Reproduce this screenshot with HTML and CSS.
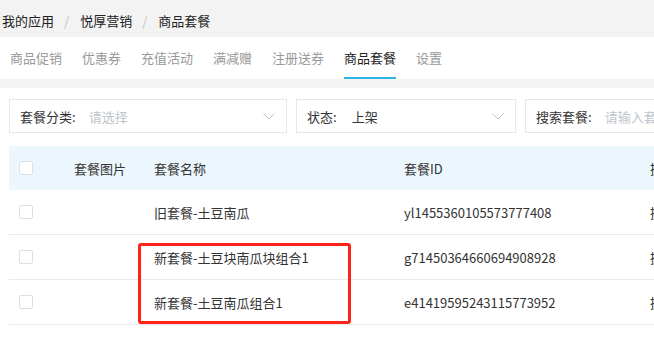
FILE: index.html
```html
<!doctype html>
<html lang="zh-CN">
  <head>
    <meta charset="utf-8" />
    <title>商品套餐</title>
    <link rel="stylesheet" href="styles.css">
  </head>
  <body>
<div class="crumb">
  <span>我的应用</span><span class="sep">/</span><span>悦厚营销</span><span class="sep">/</span><span>商品套餐</span>
</div>

<div class="tabs">
  <span class="tab">商品促销</span>
  <span class="tab">优惠券</span>
  <span class="tab">充值活动</span>
  <span class="tab">满减赠</span>
  <span class="tab">注册送券</span>
  <span class="tab active">商品套餐</span>
  <span class="tab">设置</span>
</div>

<div class="panel">
  <div class="filters">
    <div class="field wide">
      <span class="label">套餐分类:</span>
      <span class="value hint">请选择</span>
      <svg class="arrow" width="12" height="7" viewBox="0 0 12 7"><polyline points="0.5,0.5 6,6 11.5,0.5" fill="none" stroke="#c0c4cc" stroke-width="1"/></svg>
    </div>
    <div class="field mid">
      <span class="label">状态:</span>
      <span class="value">上架</span>
      <svg class="arrow" width="12" height="7" viewBox="0 0 12 7"><polyline points="0.5,0.5 6,6 11.5,0.5" fill="none" stroke="#c0c4cc" stroke-width="1"/></svg>
    </div>
    <div class="field wide">
      <span class="label">搜索套餐:</span>
      <span class="value hint">请输入套餐名称</span>
    </div>
  </div>

  <div class="table">
    <div class="row head">
      <div class="c1"><span class="check"></span></div>
      <div class="c2">套餐图片</div>
      <div class="c3">套餐名称</div>
      <div class="c4">套餐ID</div>
      <div class="c5">操作</div>
    </div>
    <div class="row">
      <div class="c1"><span class="check"></span></div>
      <div class="c2"></div>
      <div class="c3">旧套餐-土豆南瓜</div>
      <div class="c4">yl1455360105573777408</div>
      <div class="c5">操作</div>
    </div>
    <div class="row">
      <div class="c1"><span class="check"></span></div>
      <div class="c2"></div>
      <div class="c3">新套餐-土豆块南瓜块组合1</div>
      <div class="c4">g71450364660694908928</div>
      <div class="c5">操作</div>
    </div>
    <div class="row">
      <div class="c1"><span class="check"></span></div>
      <div class="c2"></div>
      <div class="c3">新套餐-土豆南瓜组合1</div>
      <div class="c4">e41419595243115773952</div>
      <div class="c5">操作</div>
    </div>
  </div>
</div>

<div class="mark"></div>
  </body>
</html>
```
FILE: styles.css
```css
html, body {
  margin: 0;
  overflow: hidden;
  background-color: #ffffff;
}

body {
  width: 900px;
  height: 364px;
  position: relative;
  font-family: "Noto Sans CJK SC", "Noto Sans", sans-serif;
  font-size: 13px;
  color: #333333;
}

.crumb {
  height: 37px;
  line-height: 41px;
  padding-left: 2px;
  background-color: #f3f3f3;
  color: #222222;
}

.sep {
  color: #c0c4cc;
  margin: 0 11px 0 10px;
}

.tabs {
  height: 42px;
  display: flex;
  gap: 20px;
  padding-left: 10px;
  background-color: #ffffff;
}

.tab {
  line-height: 42px;
  color: #999999;
  box-sizing: border-box;
  height: 42px;
}

.tab.active {
  color: #222222;
  border-bottom: 2px solid #2db3e3;
}

.panel {
  border-top: 9px solid #f3f3f3;
  padding: 11px 0 0 9px;
}

.filters {
  display: flex;
  gap: 9px;
}

.field {
  box-sizing: border-box;
  height: 34px;
  border: 1px solid #e4e7ed;
  display: flex;
  align-items: center;
  padding-left: 10px;
  padding-right: 11px;
  flex: none;
}

.field.wide {
  width: 278px;
}

.field.mid {
  width: 220px;
}

.label {
  color: #333333;
  margin-right: 13px;
}

.field.mid .label {
  margin-right: 15px;
}

.value {
  flex: 1;
  white-space: nowrap;
}

.hint {
  color: #c0c4cc;
}

.table {
  margin-top: 13px;
}

.row {
  display: flex;
  align-items: center;
  height: 44px;
  border-bottom: 1px solid #e8eaf0;
  white-space: nowrap;
}

.row.head {
  background-color: #ebf7fd;
  border-bottom: none;
}

.c1 {
  width: 65px;
  padding-left: 10px;
  box-sizing: border-box;
  display: flex;
}

.c2 {
  width: 80px;
}

.c3 {
  width: 250px;
}

.c4 {
  width: 246px;
}

.check {
  width: 12px;
  height: 12px;
  border: 1px solid #dcdfe6;
  border-radius: 2px;
  background-color: #ffffff;
}

.mark {
  position: absolute;
  left: 138px;
  top: 243px;
  width: 207px;
  height: 75px;
  border: 3px solid #ff2218;
  border-radius: 3px;
}
```
